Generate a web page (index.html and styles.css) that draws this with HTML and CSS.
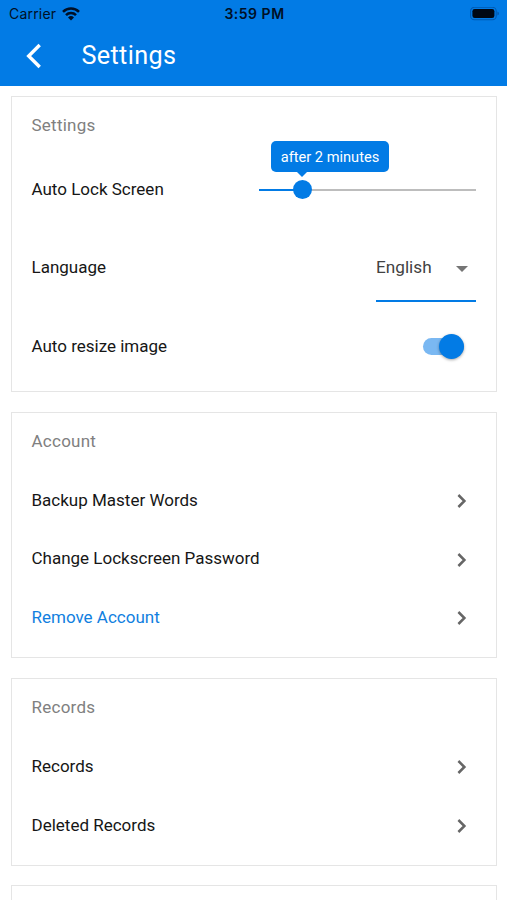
FILE: index.html
```html
<!DOCTYPE html>
<html lang="en">
<head>
<meta charset="utf-8">
<title>Settings</title>
<link rel="stylesheet" href="styles.css">
</head>
<body>
<svg class="defs" aria-hidden="true">
  <symbol id="chevron" viewBox="0 0 10 16"><path d="M1.4 2 7.4 8 1.4 14" fill="none" stroke="currentColor" stroke-width="2.5"/></symbol>
</svg>
<header class="header">
  <div class="status">
    <div class="carrier"><span class="carrier-name">Carrier</span>
      <svg class="wifi" viewBox="0 0 18 14" width="18" height="14"><g fill="none" stroke="#001026" stroke-width="2.5"><path d="M1 4.9A11.2 11.2 0 0 1 17 4.9"/><path d="M4 8.2A7 7 0 0 1 14 8.2"/></g><path d="M9 13.5 6 10.5A4.3 4.3 0 0 1 12 10.5Z" fill="#001026"/></svg>
    </div>
    <span class="time">3:59 PM</span>
    <svg class="battery" viewBox="0 0 30 14" width="30" height="14"><rect x=".6" y=".3" width="25.6" height="12.4" rx="3.8" fill="none" stroke="#0059b0" stroke-width="1.1"/><rect x="2.4" y="2" width="22" height="9" rx="2.3" fill="#000814"/><path d="M27.4 4.5q1.6.6 1.6 2t-1.6 2z" fill="#0059b0"/></svg>
  </div>
  <div class="toolbar">
    <svg class="back" viewBox="0 0 16 26" width="16" height="26"><path d="M14.7 2 3.7 13 14.7 24" fill="none" stroke="#fff" stroke-width="3.4"/></svg>
    <h1 class="title">Settings</h1>
  </div>
</header>
<main class="content">
  <section class="card controls">
    <h2 class="heading">Settings</h2>
    <div class="row"><span class="label">Auto Lock Screen</span>
      <div class="slider"><div class="fill"></div><div class="thumb"><div class="tip">after 2 minutes</div></div></div>
    </div>
    <div class="row"><span class="label">Language</span>
      <div class="select"><span class="value">English</span><span class="caret"></span></div>
    </div>
    <div class="row"><span class="label">Auto resize image</span>
      <div class="switch"><div class="knob"></div></div>
    </div>
  </section>
  <section class="card account">
    <h2 class="heading">Account</h2>
    <div class="row"><span class="label">Backup Master Words</span><svg class="chevron"><use href="#chevron"/></svg></div>
    <div class="row"><span class="label">Change Lockscreen Password</span><svg class="chevron"><use href="#chevron"/></svg></div>
    <div class="row"><span class="label link">Remove Account</span><svg class="chevron"><use href="#chevron"/></svg></div>
  </section>
  <section class="card records">
    <h2 class="heading">Records</h2>
    <div class="row"><span class="label">Records</span><svg class="chevron"><use href="#chevron"/></svg></div>
    <div class="row"><span class="label">Deleted Records</span><svg class="chevron"><use href="#chevron"/></svg></div>
  </section>
  <section class="card next"></section>
</main>
</body>
</html>
```
FILE: styles.css
```css
* { box-sizing: border-box; }
body { margin: 0; height: 900px; overflow: hidden; background: #fff; color: #161616; font-family: Roboto, "Liberation Sans", sans-serif; }
.defs { position: absolute; width: 0; height: 0; }
.header { height: 86px; background: #027be5; }
.status { height: 27px; display: grid; grid-template-columns: 1fr auto 1fr; align-items: center; padding: 0 7px 0 9px; color: #001026; font-family: Inter, "Liberation Sans", sans-serif; }
.carrier { display: flex; align-items: center; gap: 6px; }
.carrier-name { font-size: 14px; letter-spacing: .2px; }
.time { font-size: 14px; font-weight: 600; letter-spacing: .5px; }
.battery { justify-self: end; }
.toolbar { height: 58px; display: flex; align-items: center; padding-left: 25px; }
.title { margin: -2px 0 0 40.5px; color: #fff; font-size: 25.2px; font-weight: 400; letter-spacing: .35px; }
.content { display: flex; flex-direction: column; gap: 20px; padding: 10px 10px 0 11px; }
.card { border: 1.5px solid #e5e5e5; padding: 0 20px 0 19.5px; }
.controls { height: 296px; }
.account { height: 246px; }
.records { height: 188px; }
.next { height: 60px; margin-top: -1px; }
.heading { margin: 0 0 2px; height: 56px; line-height: 56px; font-size: 17px; font-weight: 400; letter-spacing: .25px; color: #808080; }
.row { height: 58.7px; display: flex; align-items: center; justify-content: space-between; }
.controls .row { height: 78.3px; }
.controls .heading { margin-bottom: -2px; }
.label { padding-bottom: 2px; font-size: 17px; }
.records .label, .account .row:nth-child(2) .label { padding-bottom: 1px; }
.link { color: #1180e0; }
.chevron { width: 10px; height: 16px; margin: 1px 9px 0 0; color: #666; }
.slider { position: relative; width: 217px; height: 2.5px; background: #bdbdbd; }
.fill { width: 43px; height: 100%; background: #027be5; }
.thumb { position: absolute; left: 34px; top: -8.5px; width: 19px; height: 19px; border-radius: 50%; background: #027be5; }
.tip { position: absolute; left: -22px; top: -39.5px; width: 118px; height: 31px; border-radius: 5px; background: #027be5; color: #fff; text-align: center; font-size: 14.6px; line-height: 32px; white-space: nowrap; }
.tip::after { content: ""; position: absolute; left: 25px; top: 30px; border: 6.5px solid transparent; border-top-color: #027be5; border-bottom: 0; }
.select { width: 100px; height: 68px; border-bottom: 2.5px solid #027be5; display: flex; align-items: center; justify-content: space-between; padding-right: 8px; }
.value { font-size: 17.2px; color: #424242; }
.caret { margin-top: 3px; border: 6px solid transparent; border-top-color: #757575; border-bottom: 0; }
.switch { position: relative; width: 41px; height: 17px; margin-right: 12px; border-radius: 9px; background: #7ab8f2; }
.knob { position: absolute; right: 0; top: -4px; width: 25px; height: 25px; border-radius: 50%; background: #027be5; box-shadow: 0 1px 3px rgba(0,0,0,.35); }
```
